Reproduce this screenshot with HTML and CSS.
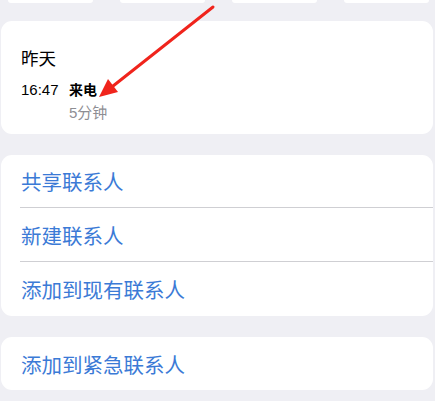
FILE: index.html
```html
<!DOCTYPE html>
<html lang="zh">
<head>
<meta charset="utf-8">
<link rel="stylesheet" href="styles.css">
</head>
<body>
<div class="page">
  <div class="btn-row">
    <div class="btn"></div>
    <div class="btn"></div>
    <div class="btn"></div>
    <div class="btn"></div>
  </div>

  <section class="card info">
    <div class="day">昨天</div>
    <div class="call">
      <span class="time">16:47</span>
      <span class="kind">来电</span>
    </div>
    <div class="dur">5分钟</div>
  </section>

  <section class="card list">
    <div class="row">共享联系人</div>
    <div class="row">新建联系人</div>
    <div class="row last">添加到现有联系人</div>
  </section>

  <section class="card list">
    <div class="row last">添加到紧急联系人</div>
  </section>

  <svg class="arrow" width="435" height="401" viewBox="0 0 435 401">
    <line x1="213" y1="7" x2="108" y2="90" stroke="#f0241c" stroke-width="3" stroke-linecap="round"/>
    <polygon points="99,97 108,79 118,92" fill="#f0241c"/>
  </svg>
</div>
</body>
</html>
```

FILE: styles.css
```css
* { box-sizing: border-box; }

html, body {
  margin: 0;
  padding: 0;
  background: #efeff4;
}

.page {
  position: relative;
  width: 435px;
  height: 401px;
  overflow: hidden;
  font-family: "Liberation Sans", "Noto Sans CJK SC", sans-serif;
  color: #000;
}

.btn-row {
  display: flex;
  gap: 27px;
  padding: 0 6px 0 8px;
  height: 3px;
}

.btn {
  flex: 1;
  background: #fff;
  border-radius: 0 0 6px 6px;
}

.card {
  background: #fff;
  border-radius: 11px;
  margin: 0 2px 0 1px;
}

.info {
  margin-top: 18px;
  height: 113px;
  padding: 27px 20px 0 20px;
}

.day {
  font-size: 17.5px;
  line-height: 22px;
}

.call {
  display: flex;
  align-items: center;
  margin-top: 9px;
  line-height: 22px;
}

.time {
  width: 48px;
  font-size: 15px;
}

.kind {
  font-size: 14px;
  font-weight: bold;
}

.dur {
  margin-top: 2px;
  margin-left: 48px;
  font-size: 15px;
  line-height: 20px;
  color: #8e8e93;
}

.list {
  margin-top: 21px;
}

.row {
  margin-left: 19px;
  padding-left: 1px;
  height: 54px;
  display: flex;
  align-items: center;
  font-size: 20.5px;
  color: #3b7ad6;
  border-bottom: 1px solid #cfcfd3;
}

.row:first-child {
  height: 53px;
}

.row.last {
  border-bottom: none;
}

.arrow {
  position: absolute;
  left: 0;
  top: 0;
  pointer-events: none;
}
```
